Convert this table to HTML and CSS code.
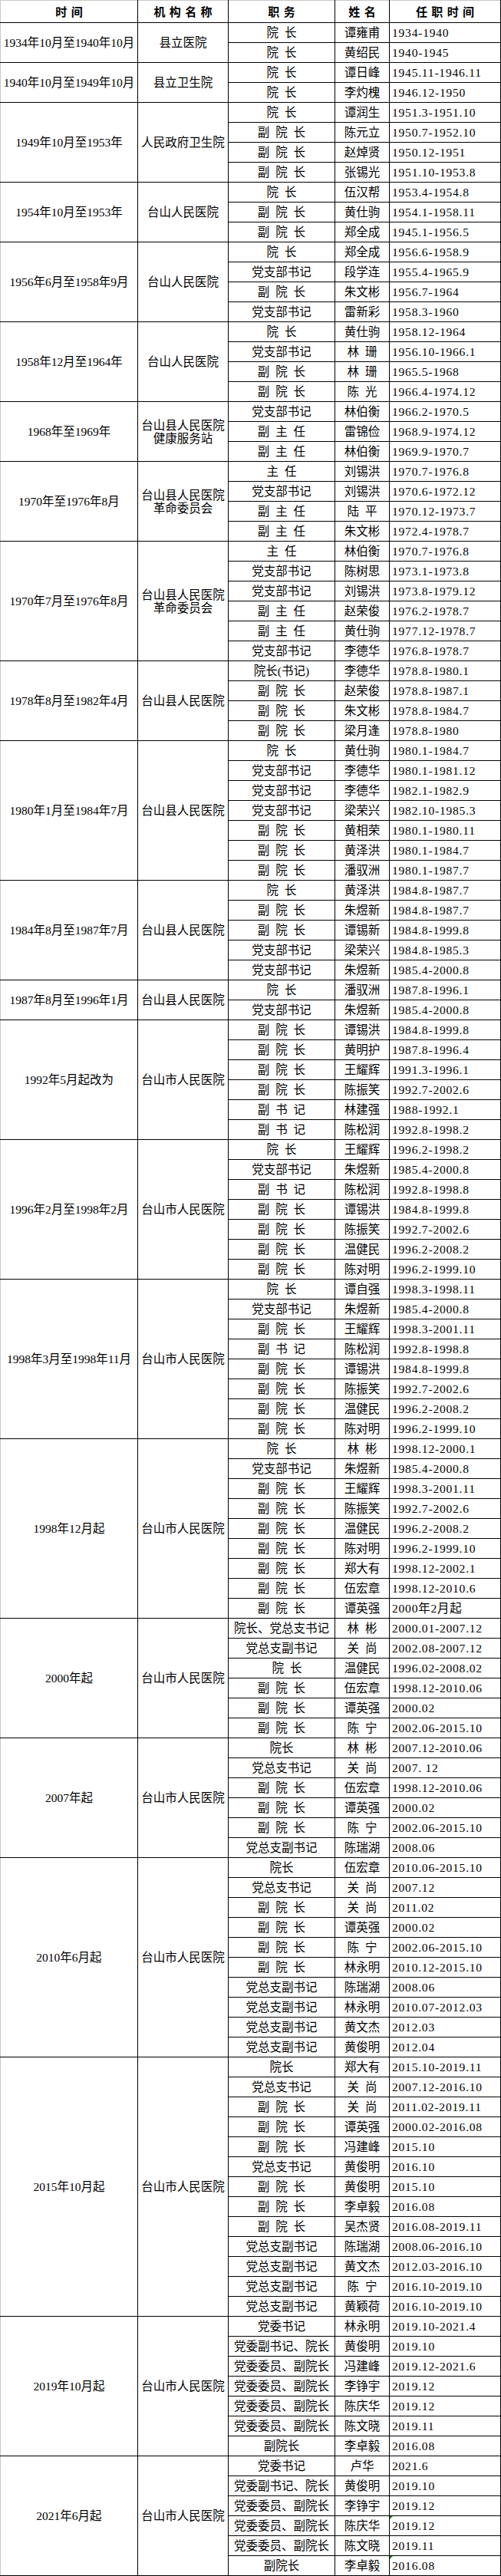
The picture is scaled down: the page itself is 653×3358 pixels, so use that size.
FILE: index.html
```html
<!DOCTYPE html>
<html lang="zh-CN">
<head>
<meta charset="utf-8">
<title>台山市人民医院历任领导</title>
<link rel="stylesheet" href="styles.css">
</head>
<body>
<table class="roster">
<colgroup>
<col class="w-period"><col class="w-org"><col class="w-post"><col class="w-name"><col class="w-date">
</colgroup>
<thead>
<tr><th class="period">时 间</th><th>机 构 名 称</th><th>职 务</th><th>姓 名</th><th>任 职 时 间</th></tr>
</thead>
<tbody>
<tr><td class="period" rowspan="2">1934年10月至1940年10月</td><td class="org" rowspan="2">县立医院</td><td class="post">院 长</td><td class="name">谭雍甫</td><td class="date">1934-1940</td></tr>
<tr><td class="post">院 长</td><td class="name">黄绍民</td><td class="date">1940-1945</td></tr>

<tr><td class="period" rowspan="2">1940年10月至1949年10月</td><td class="org" rowspan="2">县立卫生院</td><td class="post">院 长</td><td class="name">谭日峰</td><td class="date">1945.11-1946.11</td></tr>
<tr><td class="post">院 长</td><td class="name">李灼槐</td><td class="date">1946.12-1950</td></tr>

<tr><td class="period" rowspan="4">1949年10月至1953年</td><td class="org" rowspan="4">人民政府卫生院</td><td class="post">院 长</td><td class="name">谭润生</td><td class="date">1951.3-1951.10</td></tr>
<tr><td class="post">副 院 长</td><td class="name">陈元立</td><td class="date">1950.7-1952.10</td></tr>
<tr><td class="post">副 院 长</td><td class="name">赵焯贤</td><td class="date">1950.12-1951</td></tr>
<tr><td class="post">副 院 长</td><td class="name">张锡光</td><td class="date">1951.10-1953.8</td></tr>

<tr><td class="period" rowspan="3">1954年10月至1953年</td><td class="org" rowspan="3">台山人民医院</td><td class="post">院 长</td><td class="name">伍汉帮</td><td class="date">1953.4-1954.8</td></tr>
<tr><td class="post">副 院 长</td><td class="name">黄仕驹</td><td class="date">1954.1-1958.11</td></tr>
<tr><td class="post">副 院 长</td><td class="name">郑全成</td><td class="date">1945.1-1956.5</td></tr>

<tr><td class="period" rowspan="4">1956年6月至1958年9月</td><td class="org" rowspan="4">台山人民医院</td><td class="post">院 长</td><td class="name">郑全成</td><td class="date">1956.6-1958.9</td></tr>
<tr><td class="post">党支部书记</td><td class="name">段学连</td><td class="date">1955.4-1965.9</td></tr>
<tr><td class="post">副 院 长</td><td class="name">朱文彬</td><td class="date">1956.7-1964</td></tr>
<tr><td class="post">党支部书记</td><td class="name">雷新彩</td><td class="date">1958.3-1960</td></tr>

<tr><td class="period" rowspan="4">1958年12月至1964年</td><td class="org" rowspan="4">台山人民医院</td><td class="post">院 长</td><td class="name">黄仕驹</td><td class="date">1958.12-1964</td></tr>
<tr><td class="post">党支部书记</td><td class="name">林 珊</td><td class="date">1956.10-1966.1</td></tr>
<tr><td class="post">副 院 长</td><td class="name">林 珊</td><td class="date">1965.5-1968</td></tr>
<tr><td class="post">副 院 长</td><td class="name">陈 光</td><td class="date">1966.4-1974.12</td></tr>

<tr><td class="period" rowspan="3">1968年至1969年</td><td class="org two" rowspan="3">台山县人民医院<br>健康服务站</td><td class="post">党支部书记</td><td class="name">林伯衡</td><td class="date">1966.2-1970.5</td></tr>
<tr><td class="post">副 主 任</td><td class="name">雷锦俭</td><td class="date">1968.9-1974.12</td></tr>
<tr><td class="post">副 主 任</td><td class="name">林伯衡</td><td class="date">1969.9-1970.7</td></tr>

<tr><td class="period" rowspan="4">1970年至1976年8月</td><td class="org two" rowspan="4">台山县人民医院<br>革命委员会</td><td class="post">主 任</td><td class="name">刘锡洪</td><td class="date">1970.7-1976.8</td></tr>
<tr><td class="post">党支部书记</td><td class="name">刘锡洪</td><td class="date">1970.6-1972.12</td></tr>
<tr><td class="post">副 主 任</td><td class="name">陆 平</td><td class="date">1970.12-1973.7</td></tr>
<tr><td class="post">副 主 任</td><td class="name">朱文彬</td><td class="date">1972.4-1978.7</td></tr>

<tr><td class="period" rowspan="6">1970年7月至1976年8月</td><td class="org two" rowspan="6">台山县人民医院<br>革命委员会</td><td class="post">主 任</td><td class="name">林伯衡</td><td class="date">1970.7-1976.8</td></tr>
<tr><td class="post">党支部书记</td><td class="name">陈树思</td><td class="date">1973.1-1973.8</td></tr>
<tr><td class="post">党支部书记</td><td class="name">刘锡洪</td><td class="date">1973.8-1979.12</td></tr>
<tr><td class="post">副 主 任</td><td class="name">赵荣俊</td><td class="date">1976.2-1978.7</td></tr>
<tr><td class="post">副 主 任</td><td class="name">黄仕驹</td><td class="date">1977.12-1978.7</td></tr>
<tr><td class="post">党支部书记</td><td class="name">李德华</td><td class="date">1976.8-1978.7</td></tr>

<tr><td class="period" rowspan="4">1978年8月至1982年4月</td><td class="org" rowspan="4">台山县人民医院</td><td class="post">院长(书记)</td><td class="name">李德华</td><td class="date">1978.8-1980.1</td></tr>
<tr><td class="post">副 院 长</td><td class="name">赵荣俊</td><td class="date">1978.8-1987.1</td></tr>
<tr><td class="post">副 院 长</td><td class="name">朱文彬</td><td class="date">1978.8-1984.7</td></tr>
<tr><td class="post">副 院 长</td><td class="name">梁月逢</td><td class="date">1978.8-1980</td></tr>

<tr><td class="period" rowspan="7">1980年1月至1984年7月</td><td class="org" rowspan="7">台山县人民医院</td><td class="post">院 长</td><td class="name">黄仕驹</td><td class="date">1980.1-1984.7</td></tr>
<tr><td class="post">党支部书记</td><td class="name">李德华</td><td class="date">1980.1-1981.12</td></tr>
<tr><td class="post">党支部书记</td><td class="name">李德华</td><td class="date">1982.1-1982.9</td></tr>
<tr><td class="post">党支部书记</td><td class="name">梁荣兴</td><td class="date">1982.10-1985.3</td></tr>
<tr><td class="post">副 院 长</td><td class="name">黄相荣</td><td class="date">1980.1-1980.11</td></tr>
<tr><td class="post">副 院 长</td><td class="name">黄泽洪</td><td class="date">1980.1-1984.7</td></tr>
<tr><td class="post">副 院 长</td><td class="name">潘驭洲</td><td class="date">1980.1-1987.7</td></tr>

<tr><td class="period" rowspan="5">1984年8月至1987年7月</td><td class="org" rowspan="5">台山县人民医院</td><td class="post">院 长</td><td class="name">黄泽洪</td><td class="date">1984.8-1987.7</td></tr>
<tr><td class="post">副 院 长</td><td class="name">朱煜新</td><td class="date">1984.8-1987.7</td></tr>
<tr><td class="post">副 院 长</td><td class="name">谭锡新</td><td class="date">1984.8-1999.8</td></tr>
<tr><td class="post">党支部书记</td><td class="name">梁荣兴</td><td class="date">1984.8-1985.3</td></tr>
<tr><td class="post">党支部书记</td><td class="name">朱煜新</td><td class="date">1985.4-2000.8</td></tr>

<tr><td class="period" rowspan="2">1987年8月至1996年1月</td><td class="org" rowspan="2">台山县人民医院</td><td class="post">院 长</td><td class="name">潘驭洲</td><td class="date">1987.8-1996.1</td></tr>
<tr><td class="post">党支部书记</td><td class="name">朱煜新</td><td class="date">1985.4-2000.8</td></tr>

<tr><td class="period" rowspan="6">1992年5月起改为</td><td class="org" rowspan="6">台山市人民医院</td><td class="post">副 院 长</td><td class="name">谭锡洪</td><td class="date">1984.8-1999.8</td></tr>
<tr><td class="post">副 院 长</td><td class="name">黄明护</td><td class="date">1987.8-1996.4</td></tr>
<tr><td class="post">副 院 长</td><td class="name">王耀辉</td><td class="date">1991.3-1996.1</td></tr>
<tr><td class="post">副 院 长</td><td class="name">陈振笑</td><td class="date">1992.7-2002.6</td></tr>
<tr><td class="post">副 书 记</td><td class="name">林建强</td><td class="date">1988-1992.1</td></tr>
<tr><td class="post">副 书 记</td><td class="name">陈松润</td><td class="date">1992.8-1998.2</td></tr>

<tr><td class="period" rowspan="7">1996年2月至1998年2月</td><td class="org" rowspan="7">台山市人民医院</td><td class="post">院 长</td><td class="name">王耀辉</td><td class="date">1996.2-1998.2</td></tr>
<tr><td class="post">党支部书记</td><td class="name">朱煜新</td><td class="date">1985.4-2000.8</td></tr>
<tr><td class="post">副 书 记</td><td class="name">陈松润</td><td class="date">1992.8-1998.8</td></tr>
<tr><td class="post">副 院 长</td><td class="name">谭锡洪</td><td class="date">1984.8-1999.8</td></tr>
<tr><td class="post">副 院 长</td><td class="name">陈振笑</td><td class="date">1992.7-2002.6</td></tr>
<tr><td class="post">副 院 长</td><td class="name">温健民</td><td class="date">1996.2-2008.2</td></tr>
<tr><td class="post">副 院 长</td><td class="name">陈对明</td><td class="date">1996.2-1999.10</td></tr>

<tr><td class="period" rowspan="8">1998年3月至1998年11月</td><td class="org" rowspan="8">台山市人民医院</td><td class="post">院 长</td><td class="name">谭自强</td><td class="date">1998.3-1998.11</td></tr>
<tr><td class="post">党支部书记</td><td class="name">朱煜新</td><td class="date">1985.4-2000.8</td></tr>
<tr><td class="post">副 院 长</td><td class="name">王耀辉</td><td class="date">1998.3-2001.11</td></tr>
<tr><td class="post">副 书 记</td><td class="name">陈松润</td><td class="date">1992.8-1998.8</td></tr>
<tr><td class="post">副 院 长</td><td class="name">谭锡洪</td><td class="date">1984.8-1999.8</td></tr>
<tr><td class="post">副 院 长</td><td class="name">陈振笑</td><td class="date">1992.7-2002.6</td></tr>
<tr><td class="post">副 院 长</td><td class="name">温健民</td><td class="date">1996.2-2008.2</td></tr>
<tr><td class="post">副 院 长</td><td class="name">陈对明</td><td class="date">1996.2-1999.10</td></tr>

<tr><td class="period" rowspan="9">1998年12月起</td><td class="org" rowspan="9">台山市人民医院</td><td class="post">院 长</td><td class="name">林 彬</td><td class="date">1998.12-2000.1</td></tr>
<tr><td class="post">党支部书记</td><td class="name">朱煜新</td><td class="date">1985.4-2000.8</td></tr>
<tr><td class="post">副 院 长</td><td class="name">王耀辉</td><td class="date">1998.3-2001.11</td></tr>
<tr><td class="post">副 院 长</td><td class="name">陈振笑</td><td class="date">1992.7-2002.6</td></tr>
<tr><td class="post">副 院 长</td><td class="name">温健民</td><td class="date">1996.2-2008.2</td></tr>
<tr><td class="post">副 院 长</td><td class="name">陈对明</td><td class="date">1996.2-1999.10</td></tr>
<tr><td class="post">副 院 长</td><td class="name">郑大有</td><td class="date">1998.12-2002.1</td></tr>
<tr><td class="post">副 院 长</td><td class="name">伍宏章</td><td class="date">1998.12-2010.6</td></tr>
<tr><td class="post">副 院 长</td><td class="name">谭英强</td><td class="date">2000年2月起</td></tr>

<tr><td class="period" rowspan="6">2000年起</td><td class="org" rowspan="6">台山市人民医院</td><td class="post">院长、党总支书记</td><td class="name">林 彬</td><td class="date">2000.01-2007.12</td></tr>
<tr><td class="post">党总支副书记</td><td class="name">关 尚</td><td class="date">2002.08-2007.12</td></tr>
<tr><td class="post shift">院 长</td><td class="name">温健民</td><td class="date">1996.02-2008.02</td></tr>
<tr><td class="post">副 院 长</td><td class="name">伍宏章</td><td class="date">1998.12-2010.06</td></tr>
<tr><td class="post">副 院 长</td><td class="name">谭英强</td><td class="date">2000.02</td></tr>
<tr><td class="post">副 院 长</td><td class="name">陈 宁</td><td class="date">2002.06-2015.10</td></tr>

<tr><td class="period" rowspan="6">2007年起</td><td class="org" rowspan="6">台山市人民医院</td><td class="post">院长</td><td class="name">林 彬</td><td class="date">2007.12-2010.06</td></tr>
<tr><td class="post">党总支书记</td><td class="name">关 尚</td><td class="date">2007. 12</td></tr>
<tr><td class="post">副 院 长</td><td class="name">伍宏章</td><td class="date">1998.12-2010.06</td></tr>
<tr><td class="post">副 院 长</td><td class="name">谭英强</td><td class="date">2000.02</td></tr>
<tr><td class="post">副 院 长</td><td class="name">陈 宁</td><td class="date">2002.06-2015.10</td></tr>
<tr><td class="post">党总支副书记</td><td class="name">陈瑞湖</td><td class="date">2008.06</td></tr>

<tr><td class="period" rowspan="10">2010年6月起</td><td class="org" rowspan="10">台山市人民医院</td><td class="post">院长</td><td class="name">伍宏章</td><td class="date">2010.06-2015.10</td></tr>
<tr><td class="post">党总支书记</td><td class="name">关 尚</td><td class="date">2007.12</td></tr>
<tr><td class="post">副 院 长</td><td class="name">关 尚</td><td class="date">2011.02</td></tr>
<tr><td class="post">副 院 长</td><td class="name">谭英强</td><td class="date">2000.02</td></tr>
<tr><td class="post">副 院 长</td><td class="name">陈 宁</td><td class="date">2002.06-2015.10</td></tr>
<tr><td class="post">副 院 长</td><td class="name">林永明</td><td class="date">2010.12-2015.10</td></tr>
<tr><td class="post">党总支副书记</td><td class="name">陈瑞湖</td><td class="date">2008.06</td></tr>
<tr><td class="post">党总支副书记</td><td class="name">林永明</td><td class="date">2010.07-2012.03</td></tr>
<tr><td class="post">党总支副书记</td><td class="name">黄文杰</td><td class="date">2012.03</td></tr>
<tr><td class="post">党总支副书记</td><td class="name">黄俊明</td><td class="date">2012.04</td></tr>

<tr><td class="period" rowspan="13">2015年10月起</td><td class="org" rowspan="13">台山市人民医院</td><td class="post">院长</td><td class="name">郑大有</td><td class="date">2015.10-2019.11</td></tr>
<tr><td class="post">党总支书记</td><td class="name">关 尚</td><td class="date">2007.12-2016.10</td></tr>
<tr><td class="post">副 院 长</td><td class="name">关 尚</td><td class="date">2011.02-2019.11</td></tr>
<tr><td class="post">副 院 长</td><td class="name">谭英强</td><td class="date">2000.02-2016.08</td></tr>
<tr><td class="post">副 院 长</td><td class="name">冯建峰</td><td class="date">2015.10</td></tr>
<tr><td class="post">党总支书记</td><td class="name">黄俊明</td><td class="date">2016.10</td></tr>
<tr><td class="post">副 院 长</td><td class="name">黄俊明</td><td class="date">2015.10</td></tr>
<tr><td class="post">副 院 长</td><td class="name">李卓毅</td><td class="date">2016.08</td></tr>
<tr><td class="post">副 院 长</td><td class="name">吴杰贤</td><td class="date">2016.08-2019.11</td></tr>
<tr><td class="post">党总支副书记</td><td class="name">陈瑞湖</td><td class="date">2008.06-2016.10</td></tr>
<tr><td class="post">党总支副书记</td><td class="name">黄文杰</td><td class="date">2012.03-2016.10</td></tr>
<tr><td class="post">党总支副书记</td><td class="name">陈 宁</td><td class="date">2016.10-2019.10</td></tr>
<tr><td class="post">党总支副书记</td><td class="name">黄颖荷</td><td class="date">2016.10-2019.10</td></tr>

<tr><td class="period" rowspan="7">2019年10月起</td><td class="org" rowspan="7">台山市人民医院</td><td class="post">党委书记</td><td class="name">林永明</td><td class="date">2019.10-2021.4</td></tr>
<tr><td class="post">党委副书记、院长</td><td class="name">黄俊明</td><td class="date">2019.10</td></tr>
<tr><td class="post">党委委员、副院长</td><td class="name">冯建峰</td><td class="date">2019.12-2021.6</td></tr>
<tr><td class="post">党委委员、副院长</td><td class="name">李铮宇</td><td class="date">2019.12</td></tr>
<tr><td class="post">党委委员、副院长</td><td class="name">陈庆华</td><td class="date">2019.12</td></tr>
<tr><td class="post">党委委员、副院长</td><td class="name">陈文晓</td><td class="date">2019.11</td></tr>
<tr><td class="post">副院长</td><td class="name">李卓毅</td><td class="date">2016.08</td></tr>

<tr><td class="period" rowspan="6">2021年6月起</td><td class="org" rowspan="6">台山市人民医院</td><td class="post">党委书记</td><td class="name">卢华</td><td class="date">2021.6</td></tr>
<tr><td class="post">党委副书记、院长</td><td class="name">黄俊明</td><td class="date">2019.10</td></tr>
<tr><td class="post">党委委员、副院长</td><td class="name">李铮宇</td><td class="date">2019.12</td></tr>
<tr><td class="post">党委委员、副院长</td><td class="name">陈庆华</td><td class="date warn">2019.12</td></tr>
<tr><td class="post">党委委员、副院长</td><td class="name">陈文晓</td><td class="date">2019.11</td></tr>
<tr><td class="post">副院长</td><td class="name">李卓毅</td><td class="date warn">2016.08</td></tr>
</tbody>
</table>
</body>
</html>
```

FILE: styles.css
```css
html, body {
  margin: 0;
  padding: 0;
  background: #ffffff;
}

body {
  font-family: "Liberation Serif", "Noto Sans CJK SC", serif;
  font-size: 15.5px;
  color: #000000;
}

.roster {
  border-collapse: collapse;
  table-layout: fixed;
  width: 652px;
}

.w-period { width: 179px; }
.w-org { width: 118px; }
.w-post { width: 139px; }
.w-name { width: 71px; }
.w-date { width: 145px; }

.roster th,
.roster td {
  border: 1px solid #000000;
  padding: 0;
  text-align: center;
  vertical-align: middle;
  white-space: nowrap;
  overflow: hidden;
  line-height: 20px;
}

.roster thead tr { height: 29px; }
.roster tbody tr { height: 26px; }

.roster th {
  font-family: "Noto Sans CJK SC", sans-serif;
  font-weight: 700;
  font-size: 15px;
  word-spacing: 2px;
  border-top-color: #c8c8c8;
}

.roster .period {
  border-left-color: #c8c8c8;
}

.roster .org.two {
  line-height: 17px;
}

.roster .post,
.roster .name {
  word-spacing: 4px;
}

.roster .post.shift {
  padding-left: 14px;
}

.roster .date {
  text-align: left;
  padding-left: 3px;
  letter-spacing: 0.8px;
}

.roster .warn {
  position: relative;
}

.roster .warn::before {
  content: "";
  position: absolute;
  left: 0;
  top: 0;
  border-top: 4px solid #1e8a1e;
  border-right: 4px solid transparent;
}
```
